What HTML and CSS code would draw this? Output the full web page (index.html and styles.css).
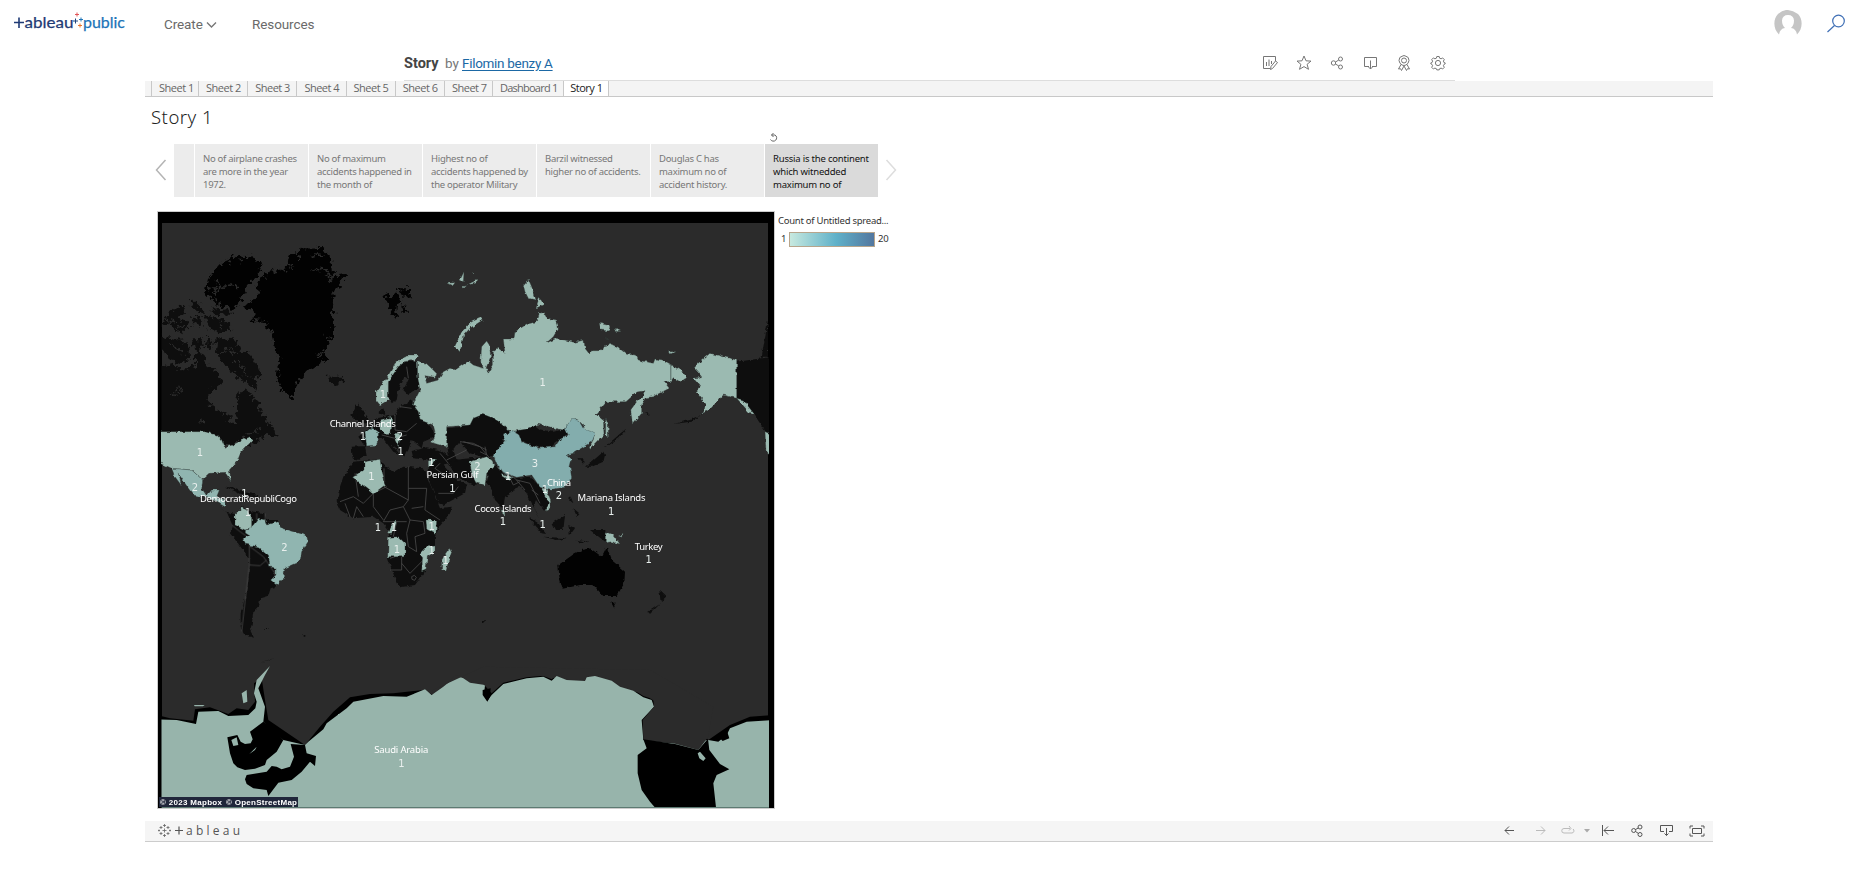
FILE: index.html
```
<!DOCTYPE html>
<html lang="en">
<head>
<meta charset="utf-8">
<title>Story | Tableau Public</title>
<link rel="stylesheet" href="styles.css">
</head>
<body>
<header class="top">
  <svg class="brand" width="114" height="26" viewBox="12 8 114 26">
    <g fill="none" stroke="#1f3a75" stroke-width="1.6"><path d="M14 22.500h10M19 17.500v10.500"/></g>
    <text class="brand-text navy" x="24.500" y="28" textLength="49" lengthAdjust="spacingAndGlyphs">ableau</text>
    <text class="brand-text blue" x="83" y="28" textLength="42" lengthAdjust="spacingAndGlyphs">public</text>
    <path d="M73 21h5M75.500 18.500v5" stroke="#1f457e"/><path d="M75 14.500h4M77 12.500v4" stroke="#e15759"/><path d="M79 19.500h4M81 17.500v4" stroke="#1c74b8"/><path d="M78 25.500h4M80 23.500v4" stroke="#e8762c"/>
  </svg>
  <nav class="nav">
    <span class="create">Create</span>
    <svg class="chev" width="11" height="8" viewBox="0 0 11 8"><path d="M1 1.500l4.500 4.500L10 1.500" fill="none" stroke="#777" stroke-width="1.400"/></svg>
    <span class="resources">Resources</span>
  </nav>
  <svg class="avatar" width="28" height="26" viewBox="0 0 28 26"><path d="M5 24.500C-1 19-1 9 4 4Q9-.5 14 0T24 4C29 9 29 19 23 24.500Q22 18.500 17 18Q20 15 20 10.500Q19.500 5 14 5T8 10.500Q8 15 11 18Q6 18.500 5 24.500Z" fill="#c5c5c5"/></svg>
  <svg class="search" width="20" height="20" viewBox="0 0 20 20"><g fill="none" stroke="#3f6fb5" stroke-width="1.200"><circle cx="12.500" cy="7" r="5.800"/><path d="M8.500 11.500L1.500 18"/></g></svg>
</header>
<section class="titlebar">
  <div class="by"><b>Story</b><span>by</span><a>Filomin benzy A</a></div>
  <div class="actions">
    <svg viewBox="0 0 16 16"><path d="M8 13.500H1.500v-12h12V6M4.500 7v4M7 4.500V11M9.500 6v3M8.500 14.500l.5-3L13.500 6l2 1.500-5 6z"/></svg>
    <svg viewBox="0 0 16 16"><path d="M8 1l2 4.800 5 .3-3.900 3.200 1.400 5L8 11.600l-4.500 2.700 1.400-5L1 6.100l5-.3z"/></svg>
    <svg viewBox="0 0 16 16"><circle cx="4.500" cy="8" r="2.200"/><circle cx="11.500" cy="4" r="2"/><circle cx="11.500" cy="12" r="2"/><path d="M6.500 7l3.300-2M6.500 9l3.300 2"/></svg>
    <svg viewBox="0 0 16 16"><path d="M6 11.500H1.500v-9h12v9H9M7.500 5.500V14M5.500 12l2 2 2-2"/></svg>
    <svg viewBox="0 0 16 16"><circle cx="8" cy="5.500" r="2.500"/><path d="M8 .5l2 .8 2.200 1.200.8 3-1 2.800-2 1.700-2 .5-2-.5-2-1.700L3 5.500l.8-3L6 1.300zM5 9.500l-2.500 4.500 2-.3 1 1.800L8 11l2.500 4.500 1-1.800 2 .3L11 9.500"/></svg>
    <svg viewBox="0 0 16 16"><circle cx="8" cy="8" r="2.600"/><path d="M6.800 1.500h2.400l.4 1.700 1.500.6 1.500-.9 1.700 1.700-.9 1.500.6 1.500 1.200.3v.9l-1.200.6-.6 1.300.9 1.600-1.700 1.700-1.500-.9-1.500.6-.4 1.200H6.800l-.4-1.200-1.500-.6-1.500.9-1.700-1.700.9-1.600L2 9.400.8 8.800v-.9L2 7.600l.6-1.500-.9-1.500 1.700-1.700 1.500.9 1.500-.6z"/></svg>
  </div>
</section>
<main class="viz">
  <div class="tabs"><span class="w47">Sheet 1</span><span>Sheet 2</span><span>Sheet 3</span><span>Sheet 4</span><span>Sheet 5</span><span>Sheet 6</span><span class="w48">Sheet 7</span><span class="dash">Dashboard 1</span><span class="active">Story 1</span></div>
  <h1>Story 1</h1>
  <div class="story">
    <svg class="arrow" width="12" height="22" viewBox="0 0 12 22"><path d="M10.500 1L1.500 11l9 10" stroke="#b4b4b4"/></svg>
    <div class="points">
      <div class="point part"></div>
      <div class="point">No of airplane crashes<br>are more in the year<br>1972.</div>
      <div class="point">No of maximum<br>accidents happened in<br>the month of</div>
      <div class="point">Highest no of<br>accidents happened by<br>the operator Military</div>
      <div class="point">Barzil witnessed<br>higher no of accidents.</div>
      <div class="point">Douglas C has<br>maximum no of<br>accident history.</div>
      <div class="point sel">Russia is the continent<br>which witnedded<br>maximum no of
        <svg class="undo" width="10" height="10" viewBox="0 0 10 10"><path d="M2.500 2H6a3.300 3.300 0 1 1-4.500 4.500M4.500 0l-2 2 2 2" fill="none" stroke="#666"/></svg>
      </div>
    </div>
    <svg class="arrow" width="12" height="22" viewBox="0 0 12 22"><path d="M1.500 1l9 10-9 10" stroke="#ddd"/></svg>
  </div>
  <div class="content">
    <div class="mapbox">
    <svg class="map" width="616" height="596" viewBox="158 212 616 596">
      <defs>
        <filter id="coast" x="-5%" y="-5%" width="110%" height="110%" color-interpolation-filters="sRGB"><feTurbulence type="fractalNoise" baseFrequency=".22" numOctaves="2" seed="4"/><feDisplacementMap in="SourceGraphic" scale="4" xChannelSelector="R" yChannelSelector="G"/></filter>
        <filter id="fjord" x="-5%" y="-5%" width="110%" height="110%" color-interpolation-filters="sRGB"><feTurbulence type="fractalNoise" baseFrequency=".2" numOctaves="3" seed="9"/><feDisplacementMap in="SourceGraphic" scale="11" xChannelSelector="R" yChannelSelector="G"/></filter>
        <clipPath id="frame"><rect x="161.500" y="223" width="607.500" height="584.500"/></clipPath>
      </defs>
      <rect x="158" y="212" width="616" height="596" fill="#000"/>
      <rect x="162" y="223" width="606" height="585" fill="#2b2b2b"/>
      <g clip-path="url(#frame)">
      <g class="land" filter="url(#fjord)">
        <g transform="translate(150 205) scale(.33333)">
          <path class="ice" d="M300 290L285 302 320 325 305 345 345 348 365 380 370 420 388 465 380 520 400 560 428 582 445 525 480 490 535 465 520 440 545 400 550 330 545 280 565 240 590 215 580 202 550 218 545 165 515 130 470 127 415 155 410 190 340 205 320 240 325 275Z"/>
          <path class="ice" d="M338 180L305 155 265 150 215 170 190 200 170 225 165 265 190 290 215 300 250 315 275 280 290 245 320 210Z"/>
          <path class="ice" d="M705 262L725 275 738 262 750 280 740 310 735 340 722 315 710 290ZM745 250L785 250 782 270 760 275ZM755 290L772 320 760 320Z"/>
          <path d="M30 350L60 325 95 295 105 320 90 345 110 350 115 370 80 385 60 355 30 365ZM115 280L140 290 165 320 150 325 130 305ZM130 335L155 340 155 365 130 355ZM165 330L190 335 240 355 245 380 200 382 170 365ZM180 308L230 315 250 330 200 328Z"/>
          <path d="M20 390L60 398 100 405 118 425 120 460 90 475 60 465 45 440 20 440ZM125 400L155 400 158 425 140 440 130 425ZM168 398L190 405 180 440 170 425Z"/>
          <path d="M200 400L250 402 265 425 300 450 335 505 330 520 310 522 325 555 290 540 260 510 230 490 210 455 195 435Z"/>
          <path d="M20 490L60 480 100 495 135 480 135 450 150 435 160 450 175 480 200 500 218 535 180 560 170 590 200 615 235 630 240 658 258 650 265 560 290 555 320 590 340 630 365 665 380 690 350 690 325 705 300 722 280 695 260 720 210 720 180 700 20 700Z"/>
          <path d="M530 515L575 515 580 528 555 543 540 535ZM620 598L640 620 650 650 620 645 605 635Z"/>
          <g class="fjords"><path d="M190 225L215 245 240 240 265 245M200 285L195 260 215 245M410 165L425 190M385 180L405 205M365 185L375 205M480 155L500 150 525 152M485 200L510 190 530 195 548 225M440 150L450 165M520 210L545 230M325 205L345 215M60 420L85 430 100 450M215 440L235 430 255 445M255 470L280 490 300 520M60 570L95 560M80 545L90 560M155 640L158 660M520 440L500 455M535 400L515 390M390 505L380 480M270 160L275 175M235 165L240 180M175 250L195 255M45 345L75 350M75 370L100 360M210 350L215 370M290 690L330 670"/></g>
        </g>
      </g>
      <g class="land" filter="url(#coast)">
        <g transform="translate(150 425) scale(.33333)">
          <path d="M230 260L255 268 275 245 300 258 342 265 350 285 385 285 395 310 370 460 378 485 362 490 355 512 330 520 328 540 310 560 305 600 300 615 312 638 285 630 272 605 272 565 285 520 295 470 298 400 260 350 240 325 248 302Z"/>
          <path d="M225 185L255 188 285 202 325 210 320 218 280 210ZM205 245L240 268 230 262Z"/>
          <path d="M340 612h15v3h-15zM330 717L370 700 360 705ZM461 630h5v5h-5z"/>
        </g>
        <g transform="translate(340 340) scale(.33333)">
          <path d="M148 110L180 65 230 65 240 110 235 145 205 165 190 150 205 120 190 110 175 150 170 180 155 190 142 160Z"/>
          <path d="M110 235L165 225 180 200 215 180 240 220 275 265 285 290 250 305 245 325 215 300 205 330 192 350 178 330 152 312 182 345 160 335 125 290 75 320 55 290 80 270ZM35 320L75 318 80 345 50 362 38 355ZM115 220L130 205 137 225ZM55 190L65 210 82 245 55 250 52 225Z"/>
          <path d="M215 333L260 322 303 332 340 360 390 355 450 350 460 370 440 395 430 430 400 435 350 410 325 370 305 375 250 358 220 355Z"/>
          <path d="M265 375L300 365 345 415 380 435 375 460 310 495 296 490 270 430Z"/>
          <path d="M318 265L370 260 395 230 440 222 485 250 510 270 485 300 450 320 475 340 440 355 390 340 360 305 340 330 350 360 330 365 320 310Z"/>
          <path d="M440 425L470 385 500 405 540 425 515 460 495 470 490 500 475 490 455 445Z"/>
          <path d="M40 365L120 358 130 375 165 395 190 380 250 385 265 420 290 480 300 505 335 500 330 520 298 560 285 590 285 630 262 650 258 690 225 735 180 742 165 715 142 650 148 600 145 570 130 550 100 530 40 535 0 510 -10 480 0 440 10 410Z"/>
        </g>
        <g transform="translate(460 400) scale(.33333)">
          <path d="M30 60L70 42 110 65 115 85 158 90 130 120 120 150 100 165 70 155 0 130V75ZM168 92L220 72 240 88 280 95 325 85 320 105 285 130 270 145 220 138 180 120Z"/>
          <path d="M80 215L110 195 125 220 165 235 210 230 250 270 270 315 252 332 228 300 220 320 242 360 200 280 185 260 165 265 130 290 125 320 105 300ZM205 350L235 370 258 402 245 400ZM275 370L315 345 310 390 285 390ZM325 375L345 385 330 405ZM250 410L320 415 290 420ZM390 390L436 390 436 425ZM355 175L370 175 370 192ZM378 200L430 155 435 165 430 185 395 200ZM330 285l10 25-12-10zM340 325l18 15-8 8zM350 420l40 5-35 5z"/>
          <path class="ice" d="M295 495L345 460 365 450 390 445 405 455 425 470 440 440 455 480 495 515 493 550 470 588 430 588 400 555 360 555 308 566 298 530ZM454 608h14l-6 15z"/>
          <path d="M598 570L620 592 602 607ZM600 612L570 642 565 635ZM68 663h6v5h-6z"/>
          <path d="M830 -115L940 -130V130L880 40 830 -5ZM905 -130L924 -240V-130ZM430 145L470 110 500 85 475 115ZM640 72L690 60 730 40 692 65ZM555 35l18 12-10-2z"/>
        </g>
      </g>
      <g class="edges" fill="none">
        <path transform="translate(340 340) scale(.33333)" d="M45 400L55 470M132 385V440L205 480V380M205 445H260M100 460L140 440M0 485L40 470 70 490 100 460 100 500 130 540M40 535L50 500 70 530M15 490L30 530M205 480L190 500 150 510 130 545 170 545 160 590M190 500L210 540 250 545 255 580M260 445L255 510 300 540M210 540L200 580 205 620 230 635 225 590 255 580M195 640L150 655M185 650V690L150 690M185 670L210 700 250 660M165 225V270L200 275 230 250M180 200L215 205M200 80L205 115M125 285L165 295 200 285M300 340L325 370M370 305L420 320 450 355M320 360L380 330M160 545H200M215 505L250 500M295 460L340 460 355 440M300 370L285 385 320 410M215 710l8-4 6 6-5 9-8-3z"/>
        <path transform="translate(150 425) scale(.33333)" d="M298 350V420L285 530 275 620M298 420L330 422 350 405M245 300L270 320 298 340M300 365L340 395 378 450M320 265V285M345 265V290"/>
        <path transform="translate(460 400) scale(.33333)" d="M0 125L40 130 80 150M170 240L210 250 240 310M110 200L165 235 195 270M60 155L80 165 75 140M150 235L160 255 180 245M215 270L235 285"/>
      </g>
      <g class="marks" filter="url(#coast)">
        <path transform="translate(460 205) scale(.33333)" d="M-128 467L-100 476 -72 503 -75 517 -105 512 -100 535 -65 525 -50 500 -30 490 -15 495 0 485 25 468 40 480 70 490 62 470 65 425 80 408 88 420 92 455 78 490 85 505 100 480 100 440 115 430 135 445 130 402 162 402 165 380 200 358 230 350 238 325 252 322 262 340 290 345 295 370 280 395 258 415 290 400 345 412 372 405 375 430 388 447 395 437 428 437 432 422 455 418 478 430 500 448 528 450 535 465 580 475 585 462 610 465 632 478 650 490 668 500 680 515 660 530 640 518 632 530 612 530 628 550 578 575 556 578 545 600 545 625 518 658 512 615 530 590 548 575 555 557 530 562 498 590 440 590 407 630 430 640 432 690 388 735 405 685 380 690 370 660 350 643 332 650 310 675 235 658 200 672 165 678 150 680 125 655 100 640 70 628 40 640 30 660 -40 665 -40 725 -85 712 -75 680 -80 660 -120 645 -125 620 -140 600 -135 585 -120 555 -127 515Z"/>
        <path transform="translate(460 205) scale(.33333)" d="M0 440L-16 425 5 380 35 350 65 337 68 345 30 370 12 390ZM190 240L205 222 215 245 228 285 205 280 195 260ZM228 310L238 280 252 298ZM418 355L450 362 445 378 422 375ZM465 370L482 378 470 380ZM628 440L645 440 632 447ZM432 400L448 405ZM-20 240L-40 232 -20 230ZM0 225L12 200 10 230ZM20 240L50 225 48 235ZM5 245l12-3-8 8zM38 202l5 3-4 2z"/>
        <path transform="translate(460 205) scale(.33333)" d="M702 485L750 445 830 465V580L790 570 745 618 725 625 740 600 708 560 722 545 700 520 728 515ZM830 580L850 585 885 630 870 625ZM915 680L940 690V760L918 740ZM437 640L445 660 445 700 437 690Z"/>
        <path transform="translate(150 425) scale(.33333)" d="M10 20H168L200 30 215 45 225 70 300 35 308 45 270 85 260 110 238 135 243 168 225 142 180 145 158 165 125 135 65 130 10 105ZM255 268L275 248 290 255 305 280 305 310 285 315 255 300Z"/>
        <path class="two" transform="translate(150 425) scale(.33333)" d="M65 130L125 135 158 165 155 190 170 212 185 195 208 195 200 215 225 225 225 245 180 220 130 210 115 190 85 145 95 182 75 155ZM285 320L310 300 325 280 345 285 350 300 385 290 395 310 470 332 474 350 455 380 450 410 405 430 400 460 382 482 362 465 378 450 378 430 360 425 355 390 325 365 285 358 278 345 300 330Z"/>
        <path transform="translate(340 340) scale(.33333)" d="M108 155L140 115 165 70 200 45 235 45 225 60 195 65 175 80 145 125 145 180 120 195 108 180ZM118 240L155 232 155 265 145 285 120 270ZM38 412L72 390 72 365 120 358 125 390 138 435 102 462ZM165 280L190 280 180 295 175 320 165 300ZM265 362L290 358 265 385ZM390 365L440 350 455 360 465 375 440 400 435 435 410 430 395 400ZM165 542L172 540 158 580 142 580 150 565ZM258 540L290 540 288 580 260 565ZM145 592L175 590 195 610 195 650 143 650ZM258 620L285 618 285 635 262 650 258 690 245 695 248 650 240 640ZM330 625L335 635 318 690 305 690 305 660ZM485 400L520 412 505 420 485 408ZM487 510h6l2 15h-7z"/>
        <path class="two" transform="translate(340 340) scale(.33333)" d="M75 278L95 262 115 275 115 305 110 315 80 318Z"/>
        <path class="three" transform="translate(460 400) scale(.33333)" d="M100 165L135 120 130 105 160 92 175 100 185 125 235 145 285 140 300 118 325 105 315 85 335 58 355 60 370 85 405 100 395 125 340 160 318 165 335 180 330 200 335 235 315 262 275 268 240 262 215 225 170 232 125 215 110 190Z"/>
        <path transform="translate(460 400) scale(.33333)" d="M436 395L460 405 480 432 455 425 436 428ZM245 270L258 265 272 300 270 325 255 332 268 310ZM475 408l15-5-8 7z"/>
      </g>
      <path d="M670.800 364V380" stroke="#556863"/>
      <g filter="url(#coast)" transform="translate(150 640) scale(.33333)">
        <path fill="#000" d="M20 225L60 235 130 242 135 208 180 202 235 222 260 205 295 210 315 185 312 130 335 115 345 180 355 240 465 315 510 260 550 215 600 172 660 162 730 160 820 150 850 165 920 150 1000 140 1130 106 1160 105 1480 160 1675 300 1740 255 1800 230 1870 225V520H20Z"/>
        <path fill="#97b4ab" d="M20 238L80 240 138 252 145 215 205 213 235 228 295 225 316 205 320 185 312 160 320 120 360 78 345 105 325 145 345 200 340 245 400 300 465 315 475 305 520 268 530 250 590 205 610 185 700 168 770 170 825 148 845 165 880 140 920 108 940 115 960 128 1005 135 1002 165 1012 183 1025 165 1060 132 1130 115 1180 110 1205 122 1220 108 1250 120 1305 123 1310 112 1335 108 1385 122 1410 140 1450 152 1480 172 1505 180 1512 200 1475 240 1480 300 1570 310 1675 300 1705 305 1730 285 1740 265 1790 245 1870 240V520H20ZM275 160L290 150 292 185 280 190ZM132 195h32l-5 4h-25z"/>
        <path fill="#2b2b2b" d="M850 150L845 162 880 138 918 105 935 108 960 125 1000 132 1025 160 1060 128 1130 112 1180 107 1205 118 1220 105 1250 117 1305 120 1310 109 1335 105 1385 119 1410 137 1450 149 1480 168 1510 178 1512 200 1478 240 1480 300 1570 310 1645 330 1674 292 1690 200 1500 90 1000 80Z"/>
        <path fill="#000" d="M1480 298L1575 312 1645 330 1674 296 1678 330 1710 372 1738 388 1700 405 1690 430 1700 520H1530L1500 485 1475 450 1463 400V345L1490 325Z"/>
        <path fill="#000" d="M340 245L370 265 400 300 380 335 350 360 345 375 315 386 285 390 262 382 250 370 240 340 232 292 262 285 272 305 285 312 302 310 308 298 300 275ZM422 312L465 315 470 340 498 348 495 378 480 365 455 395 425 420 385 428 355 468 350 450 310 445 290 432 285 418 290 405 350 395 365 378 380 380 395 388 420 380 432 350ZM998 150L1022 145 1020 170 1012 185 998 165ZM1700 285l30-15 8 25-20 8z"/>
        <path fill="#97b4ab" d="M244 300L260 292 265 315 250 318ZM298 342L320 320 315 330ZM1643 340L1650 335 1667 355 1660 363 1648 355Z"/>
      </g>
      </g>
      <path d="M162 807.500H769" stroke="#5c7a72"/>
      <g class="labels">
        <text x="362.700" y="427" textLength="66">Channel Islands</text><text x="248.500" y="502" textLength="97">DemocratiRepubliCogo</text><text x="452.500" y="478" textLength="52">Persian Gulf</text><text x="559" y="486" textLength="24">China</text><text x="611.500" y="500.500" textLength="68">Mariana Islands</text><text x="503" y="511.500" textLength="57">Cocos Islands</text><text x="648.700" y="550" textLength="28">Turkey</text><text x="401.300" y="753" textLength="54">Saudi Arabia</text>
      </g>
      <g class="nums">
        <text x="383" y="398">1</text><text x="363" y="440">1</text><text x="400" y="440">2</text><text x="400.700" y="455.400">1</text><text x="200" y="456">1</text><text x="195" y="490.500">2</text><text x="244.500" y="497">1</text><text x="248" y="516">1</text><text x="371.500" y="480">1</text><text x="431.500" y="466.400">1</text><text x="452.500" y="492">1</text><text x="477.500" y="470">2</text><text x="535" y="467">3</text><text x="508" y="480.400">1</text><text x="545" y="493">1</text><text x="559" y="499.400">2</text><text x="611.300" y="515">1</text><text x="503" y="525">1</text><text x="542.700" y="528">1</text><text x="648.700" y="563">1</text><text x="284.500" y="551">2</text><text x="378" y="531">1</text><text x="394" y="531">1</text><text x="431.600" y="530.400">1</text><text x="397" y="553.400">1</text><text x="431.600" y="554.400">1</text><text x="445.600" y="564.400">1</text><text x="542.700" y="386.400">1</text><text x="401.500" y="767">1</text>
      </g>
      <rect x="159" y="797" width="139" height="10" fill="#20263a"/>
      <text class="credit" x="160" y="805.300" textLength="62">© 2023 Mapbox</text><text class="credit" x="226" y="805.300" textLength="71">© OpenStreetMap</text>
    </svg>
    </div>
    <aside class="legend">
      <div class="legend-title">Count of Untitled spread...</div>
      <div class="scale"><span>1</span><i></i><span>20</span></div>
    </aside>
  </div>
  <footer class="foot">
    <svg class="mark" width="13" height="13" viewBox="0 0 13 13"><path d="M4.500 6.500h4M6.500 4.500v4M5 1.500h3M6.500 0v3M5 11.500h3M6.500 10v3M1.500 3.500h3M3 2v3M8.500 3.500h3M10 2v3M1.500 9.500h3M3 8v3M8.500 9.500h3M10 8v3M0 6.500h2M1 5.500v2M11 6.500h2M12 5.500v2" stroke="#666" stroke-width=".8"/></svg>
    <svg class="word" width="72" height="18" viewBox="0 0 72 18"><path d="M0 6.500h8M4 2.500v8" stroke="#555" stroke-width="1.200"/><text x="11" y="11" textLength="54">ableau</text></svg>
    <div class="tools">
      <svg width="11" height="14" viewBox="0 0 11 14"><path d="M10 6.500H1M5 2.500L1 6.500l4 4"/></svg>
      <svg class="off fwd" width="11" height="14" viewBox="0 0 11 14"><path d="M1 6.500h9M6 2.500l4 4-4 4"/></svg>
      <svg class="off redo" width="14" height="14" viewBox="0 0 14 14"><path d="M9 4.500H3a2.200 2.200 0 0 0 0 4.500h8a2.200 2.200 0 0 0 1-4M8 2l2 2.500-2 2"/></svg>
      <svg class="caret" width="6" height="14" viewBox="0 0 6 14"><path d="M0 5h6L3 8.500z"/></svg>
      <svg class="reset" width="13" height="14" viewBox="0 0 13 14"><path d="M1.500 1v11M13 6.500H3M7 2.500l-4 4 4 4"/></svg>
      <svg class="share" width="12" height="14" viewBox="0 0 12 14"><circle cx="2.700" cy="6.500" r="2"/><circle cx="9" cy="3" r="2"/><circle cx="9" cy="10.500" r="2"/><path d="M4.500 5.500l3-1.600M4.500 7.500l3 2"/></svg>
      <svg class="down" width="13" height="14" viewBox="0 0 13 14"><path d="M4 7.500H.5v-6h12v6H9M6.500 4v7.500M4.500 9.500l2 2 2-2"/></svg>
      <svg class="full" width="16" height="14" viewBox="0 0 16 14"><path d="M3.500 4.500h9v5h-9zM1 4.500V2h3M12 2h3v2.500M1 9.500V12h3M12 12h3V9.500"/></svg>
    </div>
  </footer>
</main>
</body>
</html>
```
FILE: styles.css
```
* { box-sizing: border-box; }
body { margin: 0; background: #fff; font-family: "Noto Sans", "Open Sans", sans-serif; height: 871px; overflow: hidden; }
svg { display: block; flex: none; }
.top { height: 48px; display: flex; padding-left: 12px; }
.brand { margin-top: 8px; }
.brand-text { font: 400 16px Lato, sans-serif; stroke-width: .25; }
.navy { fill: #1f3a75; stroke: #1f3a75; }
.blue { fill: #1c74b8; stroke: #1c74b8; }
.nav { display: flex; margin-left: 38px; height: 47px; align-items: center; font: 13.500px Roboto, "Liberation Sans", sans-serif; color: #6a6a6a; }
.create { width: 39px; letter-spacing: -.1px; }
.chev { margin-left: 3px; margin-top: 3px; }
.resources { margin-left: 35px; letter-spacing: -.1px; }
.avatar { margin: 10px 0 0 auto; }
.search { margin: 14px 10px 0 24px; }
.titlebar { width: 1051px; height: 33px; margin-left: 404px; border-bottom: 1px solid #ddd; display: flex; justify-content: space-between; }
.by { display: flex; align-items: baseline; padding-top: 5px; height: 26px; font: 13.500px/20px Roboto, sans-serif; color: #777; }
.by b { color: #444; width: 41px; font-size: 14.500px; }
.by span { width: 17px; }
.by a { color: #1b68a5; text-decoration: underline; font-size: 13.500px; letter-spacing: -.3px; text-underline-offset: 2px; }
.actions { display: flex; gap: 17.500px; padding: 7px 9.500px 0 0; }
.actions svg { width: 16px; height: 16px; fill: none; stroke: #777; stroke-width: 1; }
.viz { width: 1568px; margin-left: 145px; }
.tabs { height: 16px; background: #f4f4f4; border-bottom: 1px solid #c8c8c8; display: flex; padding-left: 6px; font: 11px/14px "Open Sans", sans-serif; color: #666; }
.tabs span { width: 49.200px; padding-left: 7px; border-left: 1px solid #c8c8c8; white-space: nowrap; letter-spacing: -.5px; }
.tabs .w47 { width: 47px; }
.tabs .w48 { width: 48px; }
.tabs .dash { width: 71.300px; letter-spacing: -.75px; }
.tabs .active { width: 46px; height: 15px; background: #fff; color: #222; border-right: 1px solid #c8c8c8; padding-left: 6px; }
h1 { margin: 0; height: 47px; padding: 6px 0 0 6px; font: 300 18.500px/28px "Noto Sans", "Open Sans", sans-serif; letter-spacing: .5px; color: #222; }
.story { display: flex; padding-left: 10px; height: 53px; }
.arrow { margin-top: 15px; fill: none; stroke-width: 1.500; }
.points { display: flex; gap: 1px; margin: 0 7px 0 7px; }
.point { width: 113px; height: 53px; background: #ececec; padding: 8px 0 0 8px; font-size: 9.500px; line-height: 13px; color: #777; white-space: nowrap; letter-spacing: -.28px; position: relative; }
.point.part { width: 20px; }
.point.sel { background: #dadada; color: #111; letter-spacing: -.2px; }
.undo { position: absolute; left: 3.500px; top: -11px; }
.content { display: flex; padding: 14px 0 0 12px; }
.mapbox { border: 1px solid #ccc; }
.land { fill: #0e0e0e; }
.ice { fill: #020202; }
.fjords { fill: none; stroke: #2b2b2b; stroke-width: 4.500; }
.edges { stroke: #484848; stroke-width: 2.600; }
.marks { fill: #9bbab1; stroke: #33403d; stroke-width: 1; }
.two { fill: #90b5b0; }
.three { fill: #83adad; }
.labels, .nums { fill: #fff; text-anchor: middle; }
.labels text { font: 9.500px "Noto Sans", sans-serif; }
.nums text { font: 10px "DejaVu Sans", sans-serif; fill: #e8efed; }
.credit { font: 700 8px "Liberation Sans", Arial, sans-serif; fill: #fff; }
.legend { padding: 3px 0 0 3px; color: #333; font-size: 9.500px; line-height: 13px; white-space: nowrap; }
.legend-title { letter-spacing: -.26px; }
.scale { display: flex; align-items: center; padding: 4px 0 0 3px; gap: 3px; height: 21px; }
.scale span { width: 5px; margin-top: -3px; letter-spacing: -.2px; }
.scale i { width: 86px; height: 15px; border: 1px solid #b7a58c; background: linear-gradient(90deg, #c7e9df, #5fb1c9 55%, #53779f); }
.foot { height: 21px; margin-top: 12px; background: #f5f5f5; border-bottom: 1px solid #ccc; display: flex; padding: 3px 8.500px 0 13px; }
.word { margin-left: 4px; }
.word text { font: 12px/1 "Open Sans", sans-serif; fill: #555; }
.tools { display: flex; margin-left: auto; fill: none; stroke: #555; }
.tools .off { stroke: #bbb; }
.fwd { margin-left: 20px; }
.redo { margin-left: 15px; }
.caret { margin-left: 9px; fill: #aaa; stroke: none; }
.reset { margin-left: 11px; }
.share { margin-left: 17px; }
.down { margin-left: 17px; }
.full { margin-left: 16px; }
```
